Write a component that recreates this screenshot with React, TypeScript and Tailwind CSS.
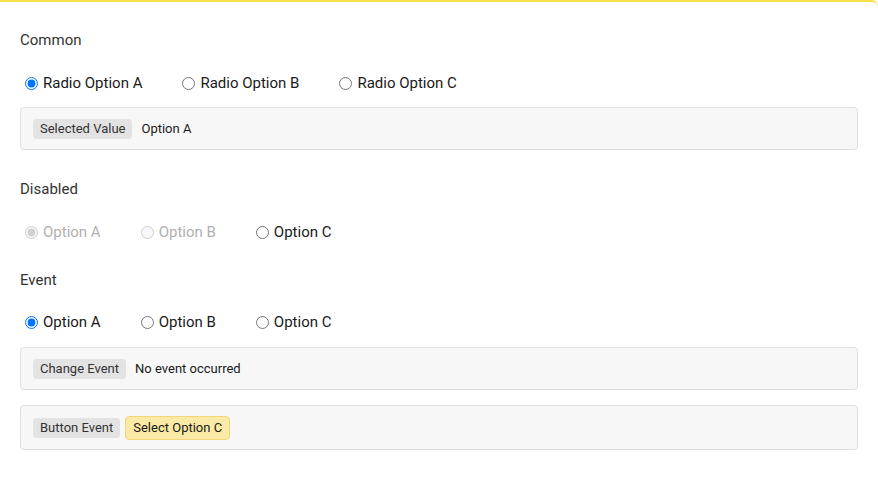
import React, { useState } from 'react';

type Opt = { value: string; label: string; disabled?: boolean };

const RadioGroup: React.FC<{
  name: string;
  options: Opt[];
  value: string;
  onChange?: (v: string) => void;
}> = ({ name, options, value, onChange }) => (
  <div className="flex items-center h-5">
    {options.map((o) => (
      <label
        key={o.value}
        className={`flex items-center mr-[35px] text-[15px] leading-5 ${o.disabled ? 'text-[#b0b0b0]' : 'text-[#1a1a1a]'}`}
      >
        <input
          type="radio"
          name={name}
          value={o.value}
          checked={value === o.value}
          disabled={o.disabled}
          onChange={() => onChange && onChange(o.value)}
          className="w-[13px] h-[13px] ml-[5px] mr-[5px]"
        />
        {o.label}
      </label>
    ))}
  </div>
);

const Tag: React.FC<{ children: React.ReactNode }> = ({ children }) => (
  <span className="inline-flex items-center h-5 px-[7px] rounded bg-[#e3e3e3] text-[13px] leading-5 text-[#333]">
    {children}
  </span>
);

const Heading: React.FC<{ children: React.ReactNode; className?: string }> = ({ children, className }) => (
  <div className={`h-5 leading-5 text-[15px] text-[#333] ${className ?? ''}`}>{children}</div>
);

export default function App() {
  const [common, setCommon] = useState('A');
  const [evt, setEvt] = useState('A');
  const [msg, setMsg] = useState('No event occurred');

  const abc = (prefix: string): Opt[] => [
    { value: 'A', label: `${prefix}Option A` },
    { value: 'B', label: `${prefix}Option B` },
    { value: 'C', label: `${prefix}Option C` },
  ];

  return (
    <div className="min-h-[481px] bg-white border-t-2 border-[#f9e04b] rounded-tr-md" style={{ fontFamily: 'Roboto, "Noto Sans", sans-serif' }}>
      <div className="px-5 pt-[28px] pb-8">
        <Heading>Common</Heading>
        <div className="mt-[23px]">
          <RadioGroup name="common" options={abc('Radio ')} value={common} onChange={setCommon} />
        </div>
        <div className="mt-[14px] h-[43px] flex items-center gap-[9px] px-3 bg-[#f7f7f7] border border-[#e0e0e0] rounded">
          <Tag>Selected Value</Tag>
          <span className="text-[13px] leading-5 text-[#1a1a1a]">Option {common}</span>
        </div>

        <Heading className="mt-[29px]">Disabled</Heading>
        <div className="mt-[23px]">
          <RadioGroup
            name="disabled"
            options={[
              { value: 'A', label: 'Option A', disabled: true },
              { value: 'B', label: 'Option B', disabled: true },
              { value: 'C', label: 'Option C' },
            ]}
            value="A"
          />
        </div>

        <Heading className="mt-[28px]">Event</Heading>
        <div className="mt-[22px]">
          <RadioGroup
            name="event"
            options={abc('')}
            value={evt}
            onChange={(v) => {
              setEvt(v);
              setMsg(`Changed to Option ${v}`);
            }}
          />
        </div>
        <div className="mt-[15px] h-[43px] flex items-center gap-[9px] px-3 bg-[#f7f7f7] border border-[#e0e0e0] rounded">
          <Tag>Change Event</Tag>
          <span className="text-[13px] leading-5 text-[#1a1a1a]">{msg}</span>
        </div>
        <div className="mt-[15px] h-[45px] flex items-center gap-[5px] px-3 bg-[#f7f7f7] border border-[#e0e0e0] rounded">
          <Tag>Button Event</Tag>
          <button
            onClick={() => {
              setEvt('C');
              setMsg('Changed to Option C');
            }}
            className="h-[24px] px-[7px] bg-[#fbeaa5] border border-[#f2d77a] rounded-sm text-[13px] text-[#1a1a1a]"
          >
            Select Option C
          </button>
        </div>
      </div>
    </div>
  );
}
